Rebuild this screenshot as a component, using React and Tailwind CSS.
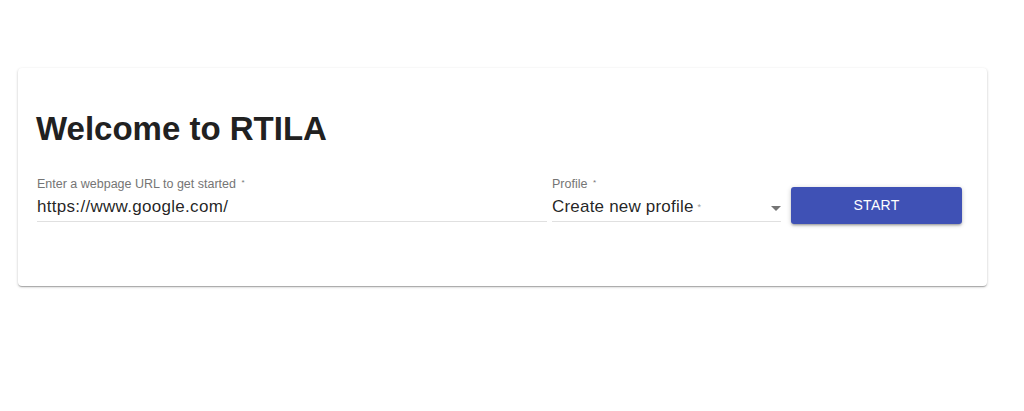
import { useState } from "react";

const Field = ({ label, children, className }) => (
  <div className={`flex flex-col ${className}`}>
    <label className="text-[12.5px] leading-[14px] text-[#757575] h-[17px]">
      {label}
      <span className="text-[8px] align-top ml-[2px] relative top-[-1px]">*</span>
    </label>
    <div className="border-b border-[#e0e0e0] h-[28px] pt-[3px] flex items-start">{children}</div>
  </div>
);

export default function App() {
  const [url, setUrl] = useState("https://www.google.com/");

  return (
    <div className="w-[1024px] h-[411px] bg-white font-['Liberation_Sans',Arial,sans-serif] pt-[68px]">
      <div className="ml-[18px] w-[969px] h-[218px] bg-white rounded-[4px] shadow-[0_1px_3px_rgba(0,0,0,0.2),0_1px_1px_rgba(0,0,0,0.14),0_2px_1px_-1px_rgba(0,0,0,0.12)] pl-[18px] pr-[25px] pt-[42px]">
        <h1 className="text-[33px] leading-[38px] font-bold text-[#212121]">Welcome to RTILA</h1>

        <div className="flex items-start mt-[29px]">
          {/* URL */}
          <Field label="Enter a webpage URL to get started " className="ml-[1px] w-[510px]">
            <input
              value={url}
              onChange={(e) => setUrl(e.target.value)}
              className="w-full text-[17px] leading-[20px] tracking-[0.3px] text-[rgba(0,0,0,0.87)] outline-none bg-transparent"
            />
          </Field>

          {/* Profile select */}
          <Field label="Profile " className="ml-[5px] w-[229px]">
            <div className="w-full flex items-center justify-between h-[20px]">
              <span className="text-[17px] leading-[20px] tracking-[0.2px] text-[rgba(0,0,0,0.87)]">
                Create new profile
                <span className="text-[9px] align-top ml-[4px] text-[#9e9e9e]">*</span>
              </span>
              <svg width="10" height="5" viewBox="0 0 10 5" className="mr-[0px] mt-[2px]">
                <path d="M0 0 L10 0 L5 5 Z" fill="#757575" />
              </svg>
            </div>
          </Field>

          <button className="ml-[10px] mt-[10px] w-[171px] h-[37px] rounded-[3px] bg-[#3f51b5] text-white text-[14px] font-medium tracking-[0.3px] shadow-[0_1px_5px_rgba(0,0,0,0.2),0_2px_2px_rgba(0,0,0,0.14),0_3px_1px_-2px_rgba(0,0,0,0.12)]">
            START
          </button>
        </div>
      </div>
    </div>
  );
}
